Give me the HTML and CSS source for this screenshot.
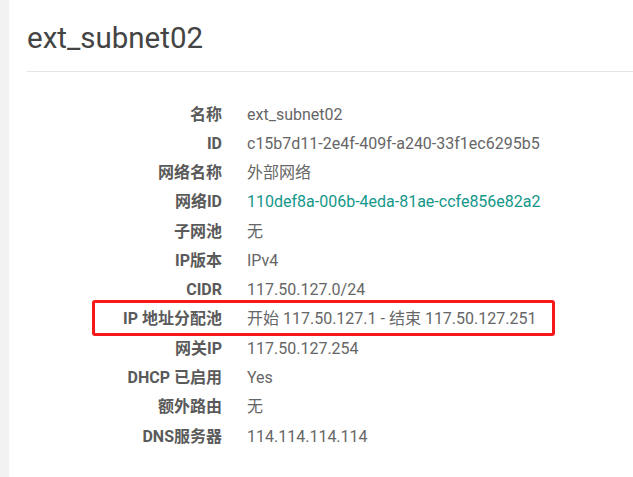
FILE: index.html
```html
<!DOCTYPE html>
<html>
<head>
<meta charset="utf-8">
<link rel="stylesheet" href="styles.css">
</head>
<body>
<div class="page">
  <aside class="side"></aside>
  <main class="content">
    <h1 class="title">ext_subnet02</h1>
    <dl class="details">
      <div class="row"><dt>名称</dt><dd>ext_subnet02</dd></div>
      <div class="row"><dt>ID</dt><dd>c15b7d11-2e4f-409f-a240-33f1ec6295b5</dd></div>
      <div class="row"><dt>网络名称</dt><dd>外部网络</dd></div>
      <div class="row"><dt>网络ID</dt><dd><a class="link" href="#">110def8a-006b-4eda-81ae-ccfe856e82a2</a></dd></div>
      <div class="row"><dt>子网池</dt><dd>无</dd></div>
      <div class="row"><dt>IP版本</dt><dd>IPv4</dd></div>
      <div class="row"><dt>CIDR</dt><dd>117.50.127.0/24</dd></div>
      <div class="row highlight"><dt>IP 地址分配池</dt><dd>开始 117.50.127.1 - 结束 117.50.127.251</dd></div>
      <div class="row"><dt>网关IP</dt><dd>117.50.127.254</dd></div>
      <div class="row"><dt>DHCP 已启用</dt><dd>Yes</dd></div>
      <div class="row"><dt>额外路由</dt><dd>无</dd></div>
      <div class="row"><dt>DNS服务器</dt><dd>114.114.114.114</dd></div>
    </dl>
  </main>
</div>
</body>
</html>
```

FILE: styles.css
```css
html, body {
  margin: 0;
  padding: 0;
  background: #ffffff;
}
body {
  font-family: Roboto, "Noto Sans CJK SC", sans-serif;
  color: #666666;
}
.page {
  display: flex;
  min-height: 477px;
}
.side {
  width: 9px;
  flex: none;
  background: #f2f2f2;
}
.content {
  flex: 1;
  padding-left: 18px;
}
.title {
  margin: 0;
  padding-top: 22px;
  padding-bottom: 17px;
  font-size: 29.5px;
  font-weight: 400;
  line-height: 32px;
  color: #444444;
  border-bottom: 1px solid #e6e6e6;
}
.details {
  margin: 28px 0 0 0;
  display: grid;
  grid-auto-rows: 29.27px;
}
.row {
  display: grid;
  grid-template-columns: 195px 1fr;
  column-gap: 25px;
  align-items: center;
  font-size: 16px;
  line-height: 20px;
  position: relative;
}
.row dt {
  text-align: right;
  font-weight: 700;
  color: #5a5a5a;
}
.row dd {
  margin: 0;
  color: #666666;
}
.link {
  color: #13978a;
  text-decoration: none;
}
.highlight::after {
  content: "";
  position: absolute;
  left: 65px;
  top: -5px;
  width: 463px;
  height: 36px;
  box-sizing: border-box;
  border: 3px solid #f5191b;
  border-radius: 3px;
}
```
